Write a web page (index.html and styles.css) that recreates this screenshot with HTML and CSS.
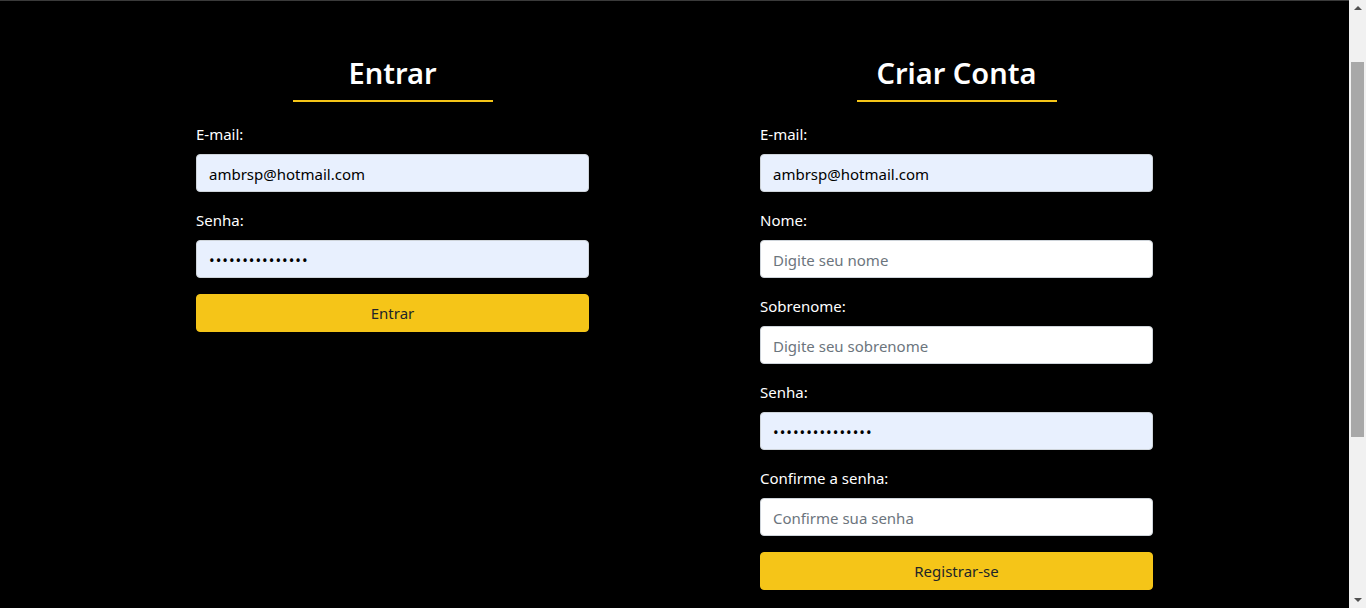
FILE: index.html
```html
<!DOCTYPE html>
<html lang="pt-BR">
<head>
<meta charset="utf-8">
<title>Entrar / Criar Conta</title>
<link rel="stylesheet" href="styles.css">
</head>
<body>
<main class="page">
  <section class="panel">
    <h2 class="panel-title">Entrar</h2>
    <form class="form">
      <div class="field">
        <label class="label" for="login-email">E-mail:</label>
        <input class="input input-filled" id="login-email" type="email" value="ambrsp@hotmail.com">
      </div>
      <div class="field">
        <label class="label" for="login-pass">Senha:</label>
        <input class="input input-filled input-pass" id="login-pass" type="password" value="123456789012345">
      </div>
      <button class="btn" type="button">Entrar</button>
    </form>
  </section>
  <section class="panel">
    <h2 class="panel-title">Criar Conta</h2>
    <form class="form">
      <div class="field">
        <label class="label" for="reg-email">E-mail:</label>
        <input class="input input-filled" id="reg-email" type="email" value="ambrsp@hotmail.com">
      </div>
      <div class="field">
        <label class="label" for="reg-nome">Nome:</label>
        <input class="input" id="reg-nome" type="text" placeholder="Digite seu nome">
      </div>
      <div class="field">
        <label class="label" for="reg-sobrenome">Sobrenome:</label>
        <input class="input" id="reg-sobrenome" type="text" placeholder="Digite seu sobrenome">
      </div>
      <div class="field">
        <label class="label" for="reg-pass">Senha:</label>
        <input class="input input-filled input-pass" id="reg-pass" type="password" value="123456789012345">
      </div>
      <div class="field">
        <label class="label" for="reg-conf">Confirme a senha:</label>
        <input class="input" id="reg-conf" type="password" placeholder="Confirme sua senha">
      </div>
      <button class="btn" type="button">Registrar-se</button>
    </form>
  </section>
</main>
<div class="scrollbar" aria-hidden="true">
  <span class="sb-arrow sb-up"></span>
  <span class="sb-thumb"></span>
  <span class="sb-arrow sb-down"></span>
</div>
</body>
</html>
```

FILE: styles.css
```css
html {
  background: #000;
}
body {
  margin: 0;
  background: #000;
  color: #fff;
  font-family: "Noto Sans", "Open Sans", sans-serif;
  font-size: 16px;
  line-height: 24px;
  border-top: 1px solid #3a3a3a;
  padding-right: 17px;
  height: 608px;
  box-sizing: border-box;
  overflow: hidden;
}
.page {
  display: flex;
  justify-content: center;
  gap: 171px;
  padding-top: 52px;
}
.panel {
  width: 393px;
  display: flex;
  flex-direction: column;
  align-items: center;
}
.panel-title {
  margin: 0;
  width: 200px;
  text-align: center;
  font-size: 29px;
  font-weight: 600;
  line-height: 40px;
  padding-bottom: 7px;
  border-bottom: 2px solid #f5c518;
  color: #fff;
}
.form {
  width: 100%;
  margin-top: 20px;
  display: flex;
  flex-direction: column;
}
.field {
  display: flex;
  flex-direction: column;
  margin-bottom: 16px;
}
.label {
  margin-bottom: 8px;
  font-size: 15px;
}
.input {
  box-sizing: border-box;
  height: 38px;
  padding: 7px 12px 5px;
  border: 1px solid #ced4da;
  border-radius: 4px;
  background: #fff;
  color: #212529;
  font-family: inherit;
  font-size: 15px;
  outline: none;
}
.input::placeholder {
  color: #6c757d;
}
.input-filled {
  background: #e8f0fe;
  color: #000;
}
.input-pass {
  letter-spacing: 1px;
}
.btn {
  height: 38px;
  border: 1px solid #f5c518;
  border-radius: 4px;
  background: #f5c518;
  color: #212529;
  font-family: inherit;
  font-size: 15px;
  cursor: pointer;
}

/* simulated browser scrollbar overlaying the right edge */
.scrollbar {
  position: fixed;
  top: 0;
  right: 0;
  width: 17px;
  height: 608px;
  background: #f1f1f1;
  display: flex;
  flex-direction: column;
  align-items: center;
}
.sb-arrow {
  width: 0;
  height: 0;
  border-left: 4px solid transparent;
  border-right: 4px solid transparent;
}
.sb-up {
  margin-top: 6px;
  border-bottom: 4px solid #505050;
}
.sb-thumb {
  width: 13px;
  height: 375px;
  margin-top: 52px;
  background: #a8a8a8;
}
.sb-down {
  margin-top: auto;
  margin-bottom: 6px;
  border-top: 4px solid #505050;
}
```
